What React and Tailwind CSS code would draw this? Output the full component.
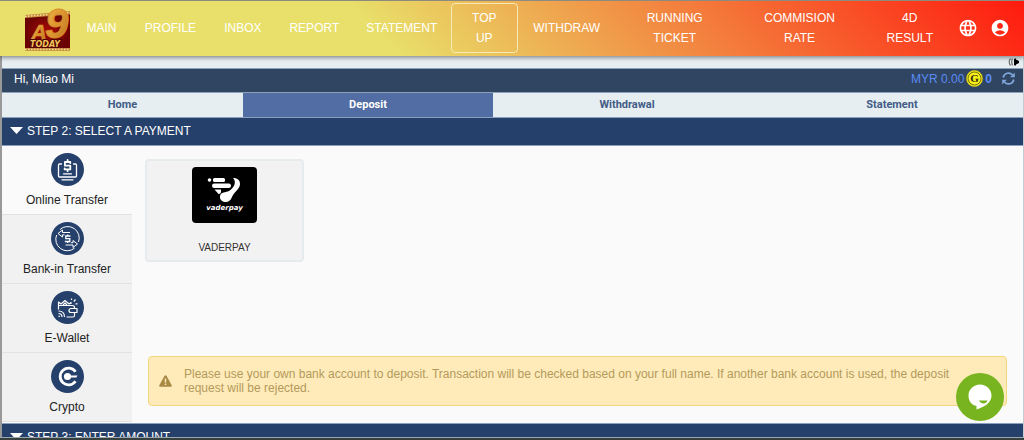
import React, { useState } from "react";
import { MdLanguage, MdAccountCircle } from "react-icons/md";

const navItems = [
  "MAIN",
  "PROFILE",
  "INBOX",
  "REPORT",
  "STATEMENT",
  "TOP UP",
  "WITHDRAW",
  "RUNNING TICKET",
  "COMMISION RATE",
  "4D RESULT",
];

const tabs = ["Home", "Deposit", "Withdrawal", "Statement"];

const Logo = () => (
  <svg width="48" height="48" viewBox="0 0 48 48" role="img" aria-label="A9 Today">
    <defs>
      <linearGradient id="gold" x1="0" y1="0" x2="1" y2="1">
        <stop offset="0" stopColor="#f2b84f" />
        <stop offset="0.5" stopColor="#dd9630" />
        <stop offset="1" stopColor="#b56f20" />
      </linearGradient>
      <radialGradient id="red">
        <stop offset="0" stopColor="#a80c08" />
        <stop offset="1" stopColor="#6a0303" />
      </radialGradient>
    </defs>
    <path d="M1 11L46 7V47L1 47Z" fill="#c98c3c" />
    <path d="M1 12.500L46 8.500M1 45.500L46 45.500" stroke="#f6e2a0" strokeWidth="1.500" strokeDasharray="1.500 1.500" />
    <path d="M1 14L46 10.500V44L1 44Z" fill="url(#red)" />
    <text x="7" y="36" fontSize="22" fontWeight="700" fontStyle="italic" fontFamily="Liberation Sans, sans-serif" fill="url(#gold)" stroke="#d98f2a" strokeWidth="0.600">
      A
    </text>
    <text x="21" y="34" fontSize="42" fontWeight="700" fontStyle="italic" fontFamily="Liberation Sans, sans-serif" fill="url(#gold)" stroke="#d98f2a" strokeWidth="1">
      9
    </text>
    <text x="6" y="43" fontSize="8" fontWeight="700" fontStyle="italic" fontFamily="DejaVu Sans, sans-serif" fill="#f0c45c" stroke="#4d0303" strokeWidth="2" paintOrder="stroke">
      TODAY
    </text>
  </svg>
);

const SpeakerIcon = () => (
  <svg width="11" height="10" viewBox="0 0 11 10" aria-hidden="true">
    <path d="M6 3L8 1V9L6 7Z" fill="#000" />
    <path d="M6 1.500L11 4V6L6 8.500Z" fill="#000" />
    <path d="M4.500 1.500Q3 5 4.500 8.500M2.500 1.500Q0 5 2.500 8.500" fill="none" stroke="#777" strokeWidth="1.300" />
  </svg>
);

const CoinIcon = () => (
  <svg width="17" height="17" viewBox="0 0 17 17" aria-hidden="true">
    <circle cx="8.500" cy="8.500" r="8" fill="#f7ee16" stroke="#d7cc10" strokeWidth="0.600" />
    <circle cx="8.500" cy="8.500" r="6.500" fill="none" stroke="#3b3a12" strokeWidth="0.700" />
    <text x="8.500" y="12" textAnchor="middle" fontSize="11" fontWeight="700" fontFamily="Liberation Serif, serif" fill="#2c2b10">
      G
    </text>
  </svg>
);

const RefreshIcon = () => (
  <svg width="13" height="13" viewBox="0 0 13 13" aria-hidden="true">
    <g fill="none" stroke="#7fa5dc" strokeWidth="1.700">
      <path d="M1.200 5.500A5.400 5.400 0 0 1 10.600 3" />
      <path d="M11.800 7.500A5.400 5.400 0 0 1 2.400 10" />
    </g>
    <path d="M12.800 0.500V5.200H8.100ZM0.200 12.500V7.800H4.900Z" fill="#7fa5dc" />
  </svg>
);

const OnlineIcon = () => (
  <svg width="33" height="33" viewBox="0 0 33 33" aria-hidden="true">
    <circle cx="16.500" cy="16.500" r="16.500" fill="#26406c" />
    <g fill="none" stroke="#fff" strokeWidth="1.300" strokeLinecap="round" strokeLinejoin="round">
      <path d="M10.500 11H8.500Q7.500 11 7.500 12V23Q7.500 24 8.500 24H24.500Q25.500 24 25.500 23V12Q25.500 11 24.500 11H22.500" />
      <path d="M12.500 20.800H20.500M11 26.800H22" />
      <path d="M19.300 10V9H13.900V12.700H19.300V16.400H13.700V15.400M16.600 7V9M16.600 16.400V18.200" strokeWidth="1.800" />
    </g>
  </svg>
);

const BankIcon = () => (
  <svg width="33" height="33" viewBox="0 0 33 33" aria-hidden="true">
    <circle cx="16.500" cy="16.500" r="16.500" fill="#26406c" />
    <g fill="none" stroke="#fff" strokeWidth="1">
      <path d="M9 7.500A11.500 11.500 0 0 1 27.500 20M5.600 13A11.500 11.500 0 0 0 23.500 26.200" />
      <path d="M19 10.500H11.500V8L7 11.500L11.500 15V12.800H13.500" />
      <path d="M14.500 23H22V25.500L26.500 22L22 18.500V20.700H20" />
      <path d="M18.800 14.800V14H14.800V16.700H18.800V19.500H14.500V18.700M16.700 12.500V14M16.700 19.500V21" strokeWidth="1.300" />
    </g>
  </svg>
);

const WalletIcon = () => (
  <svg width="33" height="33" viewBox="0 0 33 33" aria-hidden="true">
    <circle cx="16.500" cy="16.500" r="16.500" fill="#26406c" />
    <g fill="none" stroke="#fff" strokeWidth="1.200" strokeLinejoin="round">
      <path d="M7.500 18.500V11L10 13L14 9.500L18 13L20 11.500V13M7.500 14.500H21.500Q23.500 14.500 23.500 17M12 14L14 12L16 14" />
      <path d="M26 17.500H20Q18 17.500 18 19.500T20 21.500H26ZM23.500 22V24.500Q23.500 26 22 26H15.500" />
      <path d="M7.500 20Q13.500 20 13.500 26M7.500 22.500Q11 22.500 11 26M7.500 25.200Q8.500 25.200 8.500 26" />
      <path d="M20.500 7.500V9M22.800 10.500L24.500 8.500M24.500 12.800H26.500" />
    </g>
  </svg>
);

const CryptoIcon = () => (
  <svg width="33" height="33" viewBox="0 0 33 33" aria-hidden="true">
    <circle cx="16.500" cy="16.500" r="16.500" fill="#26406c" />
    <path d="M24.500 11.700A8.400 8.400 0 1 0 24.500 21.300" fill="none" stroke="#fff" strokeWidth="2.800" />
    <circle cx="16.500" cy="16.500" r="3.600" fill="#fff" />
    <path d="M17 15.400H26.500L25.400 17.600H17Z" fill="#fff" />
  </svg>
);

const VaderpayLogo = () => (
  <svg className="rounded" width="65" height="56" viewBox="0 0 65 56" role="img" aria-label="vaderpay">
    <rect width="65" height="56" fill="#000" />
    <g fill="#fff">
      <circle cx="17.500" cy="13" r="1.800" />
      <rect x="21" y="11" width="12" height="4" rx="1.500" />
      <rect x="20" y="16.500" width="19" height="4.500" rx="2.200" />
      <path d="M22.500 22.500H29V24.500Q29 27 26.500 27Z" />
      <path d="M41 11C46 11 48 13.500 48 17C48 22 42 25 40 30C38.500 34 36 35 33.500 35C30 35 27.500 32.500 28 29C28.500 25 34 25.500 37 24C42 21 45 15 41 11Z" />
    </g>
    <text x="32.500" y="43" textAnchor="middle" fontSize="7" fontWeight="700" fontStyle="italic" fontFamily="DejaVu Sans, sans-serif" fill="#fff">
      vaderpay
    </text>
  </svg>
);

const methods = [
  { name: "Online Transfer", icon: OnlineIcon },
  { name: "Bank-in Transfer", icon: BankIcon },
  { name: "E-Wallet", icon: WalletIcon },
  { name: "Crypto", icon: CryptoIcon },
];

const StepHeader = ({ children }) => (
  <h2 className="shrink-0 border-y border-[#8b9fc0] bg-[#26406c] text-white">
    <button type="button" className="flex h-[27px] w-full items-center gap-1 px-2 pb-0.5">
      <svg width="13" height="7" viewBox="0 0 13 7" aria-hidden="true">
        <path d="M0 0H13L6.500 7Z" fill="#fff" />
      </svg>
      {children}
    </button>
  </h2>
);

const App = () => {
  const [method, setMethod] = useState("Online Transfer");

  return (
    <div className="flex h-screen flex-col overflow-hidden bg-[#e6eef2] font-['Liberation_Sans',Arial,sans-serif] text-xs">
      <header className="relative z-10 flex h-14 shrink-0 items-center border-t border-[#8b8b80] bg-[linear-gradient(45deg,#e8e06a_37%,#ff1a0e_100%)] pr-3.5 pb-0.5 pl-6 text-white shadow-[0_2px_4px_rgba(0,0,0,0.4)]">
        <a href="#home" className="shrink-0">
          <Logo />
        </a>
        <nav className="grid flex-1 grid-cols-[59fr_79fr_66fr_77fr_98fr_67fr_98fr_118fr_132fr_86fr] items-center">
          {navItems.map((item) => (
            <a
              key={item}
              href="#nav"
              className={`flex h-[50px] items-center justify-center rounded border text-center leading-5 ${
                item === "TOP UP" ? "border-[#f7ebb5]" : "border-transparent"
              } ${item.includes(" ") ? "px-5" : "px-3"}`}
            >
              {item}
            </a>
          ))}
        </nav>
        <div className="flex gap-3 pl-1">
          <button type="button" aria-label="Language">
            <MdLanguage size={20} />
          </button>
          <button type="button" aria-label="Account">
            <MdAccountCircle size={20} />
          </button>
        </div>
      </header>

      <main className="flex min-h-0 flex-1 flex-col overflow-hidden border-r border-l-2 border-r-[#c5ccd2] border-l-[#999]">
        <div className="flex h-3 shrink-0 items-center justify-end px-1">
          <SpeakerIcon />
        </div>

        <div className="flex h-[25px] shrink-0 items-center justify-between border-y border-[#8ba3b8] bg-[#304562] pr-2 pb-1 pl-3 text-white">
          <span>Hi, Miao Mi</span>
          <div className="flex items-center gap-0.5 text-[#5b8cf5]">
            <span>MYR 0.00</span>
            <CoinIcon />
            <b>0</b>
            <button type="button" aria-label="Refresh balance" className="pl-2">
              <RefreshIcon />
            </button>
          </div>
        </div>

        <nav className="grid h-6 shrink-0 grid-cols-[241fr_250fr_268fr_262fr] font-[Roboto,sans-serif] text-[11px] font-bold text-[#425c86]">
          {tabs.map((tab) => (
            <a
              key={tab}
              href="#tab"
              className={`flex items-center justify-center pt-px ${
                tab === "Deposit" ? "bg-[#516da3] text-white" : ""
              }`}
            >
              {tab}
            </a>
          ))}
        </nav>

        <StepHeader>STEP 2: SELECT A PAYMENT</StepHeader>

        <section className="flex shrink-0 bg-[#fafafa] pb-px text-[#222]">
          <div className="w-[130px] shrink-0">
            {methods.map(({ name, icon: Icon }) => (
              <button
                key={name}
                type="button"
                onClick={() => setMethod(name)}
                className={`flex h-[69px] w-full flex-col items-center gap-1.5 border-b border-[#e2e2e2] pt-[7px] ${
                  method === name ? "bg-[#fafafa]" : "bg-[#f1f1f1]"
                }`}
              >
                <Icon />
                {name}
              </button>
            ))}
          </div>

          <div className="flex flex-1 flex-col items-start justify-between px-[13px] pt-[13px] pb-4">
            <button
              type="button"
              className="flex h-[103px] w-[159px] flex-col items-center justify-between rounded border-2 border-[#e6ecee] bg-[#f2f2f2] px-2 pt-1.5 pb-1.5 text-[10px] text-[#333]"
            >
              <VaderpayLogo />
              VADERPAY
            </button>
            <div className="w-full pr-[3px] pl-[3px]">
              <div
                role="alert"
                className="flex items-center gap-3 rounded border border-[#f3d77c] bg-[#ffebba] py-2.5 pr-10 pl-2.5 text-[#b39a5b]"
              >
                <svg className="shrink-0" width="13" height="12" viewBox="0 0 13 12" aria-hidden="true">
                  <path d="M6.500 0.300Q7.200 0.300 7.600 1L12.700 10.200Q13.200 11.700 11.800 11.700H1.200Q-0.200 11.700 0.300 10.200L5.400 1Q5.800 0.300 6.500 0.300Z" fill="#a98a45" />
                  <path d="M6.500 3.500V7.500M6.500 8.500V10" stroke="#ffebba" strokeWidth="1.500" />
                </svg>
                <p className="leading-[14px]">
                  Please use your own bank account to deposit. Transaction will be checked based on your full name. If another bank account is used, the deposit request will be rejected.
                </p>
              </div>
            </div>
          </div>
        </section>

        <StepHeader>STEP 3: ENTER AMOUNT</StepHeader>
      </main>

      <footer className="h-[3px] shrink-0 border-t border-[#9aa5b0] bg-[#35403f]" />

      <button
        type="button"
        aria-label="Open chat"
        className="fixed right-5 bottom-[19px] z-20 flex size-12 items-center justify-center rounded-full bg-[#77b41f]"
      >
        <svg width="24" height="26" viewBox="0 0 24 26" aria-hidden="true">
          <path d="M12 0.500C18.500 0.500 23.500 5.500 23.500 11.500C23.500 19 16 23 8.500 25.500V22C3.500 21 0.500 17 0.500 11.500C0.500 5.500 5.500 0.500 12 0.500Z" fill="#fff" />
          <path d="M11 16.500H19.500Q18.500 19.500 15.500 19.500Q12.500 19.500 11 16.500Z" fill="#77b41f" />
        </svg>
      </button>
    </div>
  );
};

export default App;
